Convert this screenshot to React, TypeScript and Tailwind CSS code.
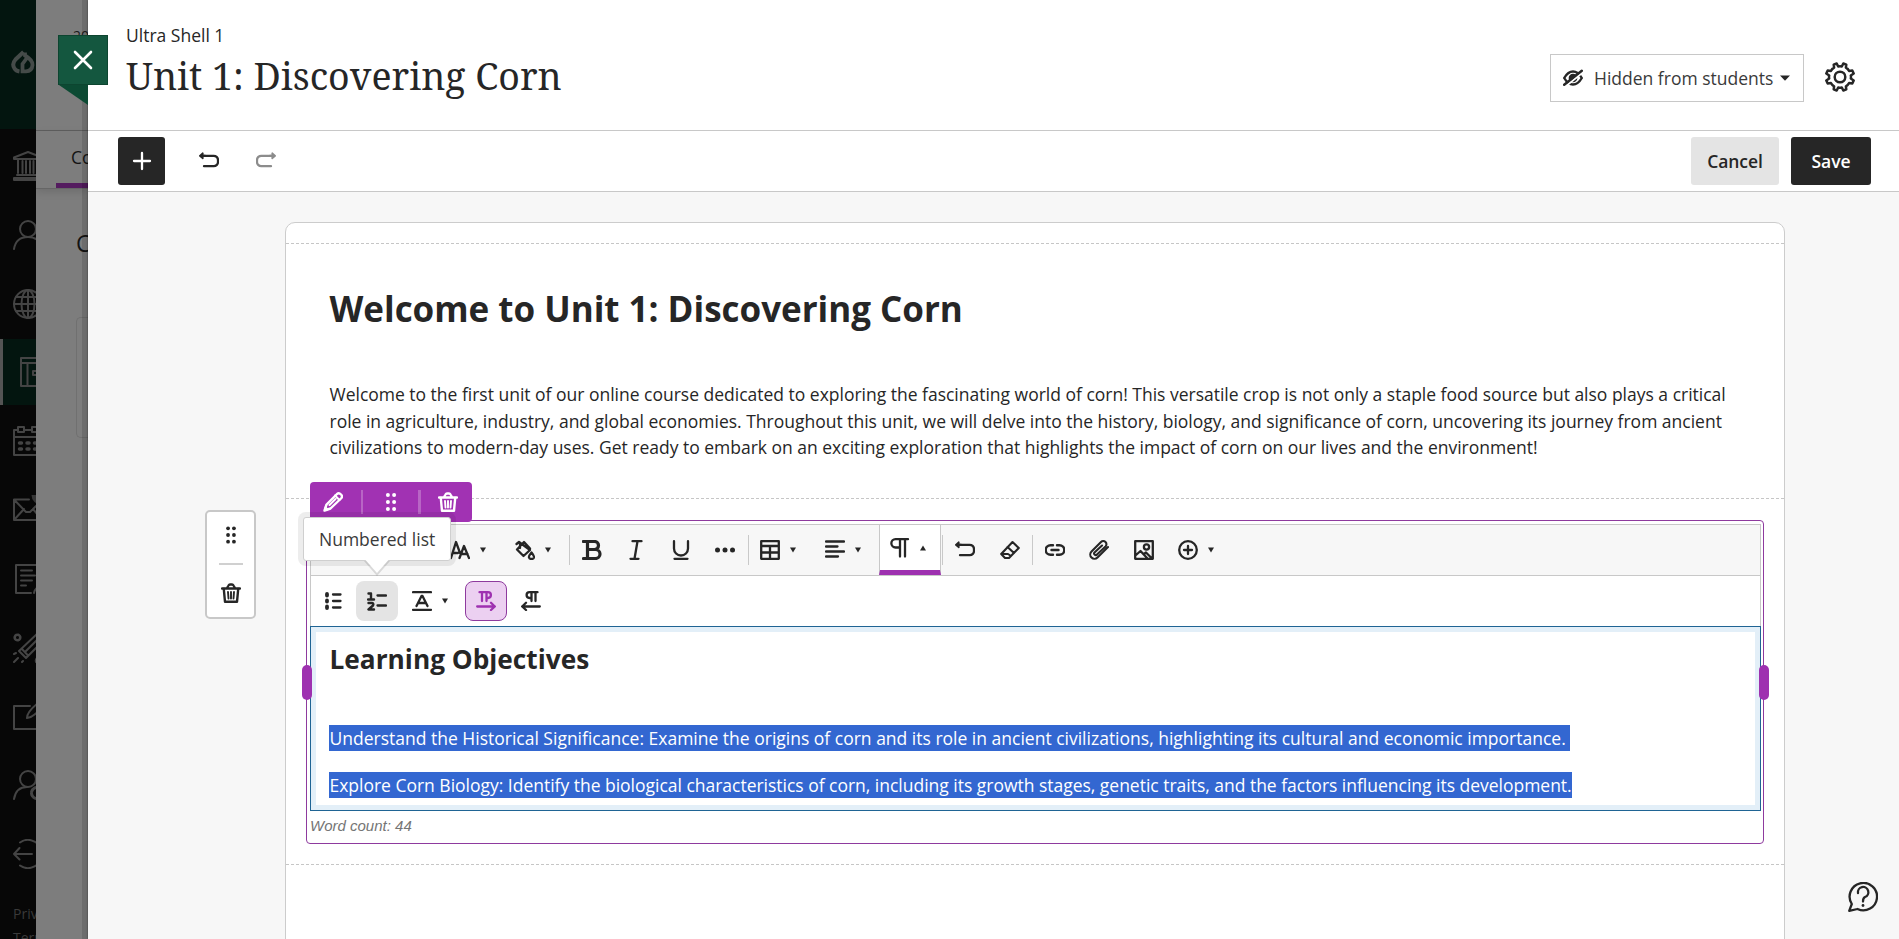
import React from 'react';

type IconProps = { className?: string; children: React.ReactNode; box?: string; weight?: number };

const Icon = ({ className = 'size-5', children, box = '0 0 20 20', weight = 2.3 }: IconProps) => (
  <svg
    viewBox={box}
    className={`shrink-0 ${className}`}
    fill="none"
    stroke="currentColor"
    strokeWidth={weight}
    strokeLinecap="round"
    strokeLinejoin="round"
  >
    {children}
  </svg>
);

const Undo = () => (
  <Icon>
    <path d="M5 4.800H14.500A4.300 4.300 0 0 1 19 9V10.500A4.300 4.300 0 0 1 14.500 15.200H5" />
    <path d="M0.800 4.800L3.800 2.200V7.400Z" fill="currentColor" strokeWidth="1.600" />
    <path d="M3 4.800H6" />
  </Icon>
);

const Trash = () => (
  <Icon>
    <path d="M1 5.500H19M6 5L7.500 2.500Q8 1.500 9 1.500H11Q12 1.500 12.500 2.500L14 5" />
    <path d="M2.800 6L4 18.800H16L17.200 6" strokeWidth="2.400" />
    <path d="M7 9L7.500 15.500M10 9V15.500M13 9L12.500 15.500" strokeWidth="1.900" />
  </Icon>
);

const Grip = () => (
  <Icon>
    <g fill="currentColor" stroke="none">
      {[3, 10, 17].map((y) => (
        <g key={y}>
          <circle cx="6.900" cy={y} r="2" />
          <circle cx="13.100" cy={y} r="2" />
        </g>
      ))}
    </g>
  </Icon>
);

const Caret = ({ up = false }: { up?: boolean }) => (
  <svg viewBox="0 0 6 6" className="size-1.5 shrink-0" fill="currentColor">
    <path d={up ? 'M0 5.500L3 0.500L6 5.500Z' : 'M0 0.500L3 5.500L6 0.500Z'} />
  </svg>
);

const Divider = () => <div className="h-[30px] w-px shrink-0 bg-[#c9c9c9]" />;

const DashedLine = () => (
  <div className="h-px w-full shrink-0 bg-[repeating-linear-gradient(to_right,#c6c6c6_0_3px,transparent_3px_5px)]" />
);

const Tool = ({ children }: { children: React.ReactNode }) => (
  <button className="flex h-full flex-1 items-center justify-center">{children}</button>
);

const DropTool = ({ children }: { children: React.ReactNode }) => (
  <button className="flex h-full w-[65px] shrink-0 items-center gap-2.5 pl-[11px]">
    {children}
    <Caret />
  </button>
);

const navIcons: { id: string; indent: string; active?: boolean; draw: React.ReactNode }[] = [
  {
    id: 'institution',
    indent: 'pl-[13px]',
    draw: (
      <>
        <path d="M1 8V6.500L15 1L29 6.500V8Z" />
        <path d="M5 9V22M9.500 10V22M13 10V22M17 10V22M20.500 10V22M25 9V22M4 24H26M1 29V27H29V29Z" />
      </>
    ),
  },
  {
    id: 'profile',
    indent: 'pl-[13px]',
    draw: (
      <>
        <circle cx="15" cy="9" r="8" />
        <path d="M1 29Q3 17 15 17T29 29" />
      </>
    ),
  },
  {
    id: 'activity',
    indent: 'pl-[13px]',
    draw: (
      <>
        <circle cx="15" cy="15" r="14" />
        <ellipse cx="15" cy="15" rx="6.500" ry="14" />
        <path d="M15 1V29M1 15H29M3 8H27M3 22H27" />
      </>
    ),
  },
  {
    id: 'courses',
    indent: 'pl-[17px]',
    active: true,
    draw: (
      <>
        <path d="M1 1H29V29H1ZM1 6H29M7.500 6V29M20 14H13V18H20" />
      </>
    ),
  },
  {
    id: 'calendar',
    indent: 'pl-[13px]',
    draw: (
      <>
        <path d="M4.500 4H1V29H29V4H26M12.500 4H18M1 11H29" />
        <rect x="5" y="1" width="6" height="5" />
        <rect x="19" y="1" width="6" height="5" />
        <path d="M6.500 17H8.500M14 17H16M21.500 17H23.500M6.500 23H8.500M14 23H16M21.500 23H23.500" strokeWidth="3.500" />
      </>
    ),
  },
  {
    id: 'messages',
    indent: 'pl-[13px]',
    draw: (
      <>
        <path d="M16 4.500H1V25H29V4.500M1 4.500L13 17H17L23 11M1 25L11 14M20 14L29 25" />
        <circle cx="28" cy="0" r="11" fill="#070707" stroke="none" />
        <circle cx="28" cy="0" r="9.500" fill="#353535" stroke="none" />
      </>
    ),
  },
  {
    id: 'grades',
    indent: 'pl-[15px]',
    draw: (
      <>
        <path d="M16 29H1V1H25V18M6 6.500H17M6 11.500H20M6 16.500H17M6 21.500H11M19 29Q20 24 25 22" />
      </>
    ),
  },
  {
    id: 'tools',
    indent: 'pl-[13px]',
    draw: (
      <>
        <circle cx="4.500" cy="4.500" r="2.800" strokeWidth="2.600" strokeDasharray="2.500 1" />
        <path d="M24 1L6 18L13 25L30 8M8.500 15.500L15 22.500M13 18L24 7M1 21L3 20M1 29L5 25M9 29L10 28M23 29Q22 26 25 24" />
      </>
    ),
  },
  {
    id: 'assist',
    indent: 'pl-[13px]',
    draw: (
      <>
        <path d="M17 4H1V27H28V15M14 16Q14 10 24 2L29 5Q21 15 14 16Z" />
      </>
    ),
  },
  {
    id: 'admin',
    indent: 'pl-[13px]',
    draw: (
      <>
        <circle cx="15" cy="9" r="8" />
        <path d="M1 29Q3 17 14 17" />
        <circle cx="24" cy="23" r="5.500" strokeDasharray="3 1.500" strokeWidth="3" />
      </>
    ),
  },
  {
    id: 'sign-out',
    indent: 'pl-[13px]',
    draw: (
      <>
        <path d="M7 3.500A14 14 0 0 1 29 15A14 14 0 0 1 7 26.500M19 15H1M6.500 9L1 15L6.500 20.500" />
      </>
    ),
  },
];

const Sidebar = () => (
  <aside className="flex h-full w-9 shrink-0 flex-col overflow-hidden bg-[#070707] text-[#444444]">
    <div className="flex h-[129px] shrink-0 items-start bg-[#03150f] pt-[50px] pl-[11px]">
      <svg viewBox="0 0 24 24" className="size-6 shrink-0" fill="none" stroke="#454b49" strokeWidth="4">
        <path d="M12.500 2L4.500 9.500Q0.500 14 3.500 18.500Q5 21 8.500 21.500" />
        <path d="M14 2.500V5.500Q21.800 10 21.500 15Q21 21 15 21.300H11.500V14L15.500 8.500" strokeWidth="3.800" />
      </svg>
    </div>
    <nav className="flex shrink-0 flex-col gap-[2.800px] pt-[3.800px]">
      {navIcons.map((n) => (
        <div
          key={n.id}
          className={
            n.active
              ? 'flex h-[66px] items-center overflow-hidden border-l-[3px] border-[#545454] bg-[#03150f]'
              : 'flex h-[66px] items-center overflow-hidden pt-px'
          }
        >
          <div className={n.indent}>
            <Icon className="size-[30px]" box="0 0 30 30" weight={2}>
              {n.draw}
            </Icon>
          </div>
        </div>
      ))}
    </nav>
    <div className="pt-[15px] pl-[13px] text-[14px] leading-[24px] text-[#3a3a3a]">
      <div>Privacy</div>
      <div>Terms</div>
    </div>
  </aside>
);

const CoursePeek = () => (
  <div className="relative flex h-full w-[52px] shrink-0 flex-col overflow-hidden bg-[#7d7d7d]">
    <div className="h-[131px] shrink-0 border-b border-[#5f5f5f] pt-[29px] pl-[37px] text-[14px] leading-[14px] text-[#1b1b1b]">
      2022
    </div>
    <div className="flex h-[58px] shrink-0 flex-col justify-between border-b border-[#666666] shadow-[0_3px_8px_rgba(0,0,0,0.12)]">
      <div className="pt-[14px] pl-[35px] text-[17.500px] leading-[24px] text-[#141414]">Content</div>
      <div className="ml-5 h-[5px] w-8 bg-[#541c5f]" />
    </div>
    <div className="pt-[38px] pl-10 text-[23px] leading-[32px] text-[#141414]">Course</div>
    <div className="mt-[58px] ml-10 h-[121px] w-3 rounded-l-[5px] border border-r-0 border-[#707070]" />
    <div className="absolute top-0 right-0 h-full w-1.5 bg-black/12" />
  </div>
);

const Header = () => (
  <header className="flex h-[131px] shrink-0 justify-between border-b border-[#c8c8c8] bg-white pr-11 pl-[38px]">
    <div className="flex flex-col pt-[23px]">
      <div className="text-[17.500px] leading-6">Ultra Shell 1</div>
      <h1 className="mt-[3px] font-['Noto_Serif',serif] text-[37.500px] leading-[51px]">Unit 1: Discovering Corn</h1>
    </div>
    <div className="flex items-start gap-[21px] pt-[54px]">
      <button className="flex h-12 w-[254px] items-center border border-[#c8c8c8] pl-3">
        <Icon>
          <path d="M1.200 10Q5 3.500 10 3.500T18.800 10Q15 16.500 10 16.500T1.200 10Z" strokeWidth="2.400" />
          <circle cx="10" cy="10" r="3.200" fill="currentColor" />
          <path d="M3 18L19.500 4.500" stroke="white" strokeWidth="2" />
          <path d="M1.200 16.800L18.800 2.800" strokeWidth="2.500" />
        </Icon>
        <span className="ml-[11px] text-[17.500px] leading-6 text-[#3a3a3a]">Hidden from students</span>
        <svg viewBox="0 0 10 6" className="ml-[7px] h-[6px] w-[10px]" fill="currentColor">
          <path d="M0 0.500H10L5 5.800Z" />
        </svg>
      </button>
      <svg viewBox="-15 -15 30 30" className="mt-2 size-[30px]" fill="none" stroke="currentColor" strokeWidth="2.500" strokeLinejoin="round">
        <circle r="5.300" />
        {/* eight-tooth gear outline */}
        <path d="M-1.800 -10.500L-3.300 -13.500L-6.300 -12.300L-5.900 -9.300Q-8 -8.200 -9.100 -6L-12.300 -6.500L-13.700 -3.500L-10.800 -1.500Q-11.200 0 -10.800 1.500L-13.700 3.500L-12.300 6.500L-9.100 6Q-8 8.200 -5.900 9.300L-6.300 12.300L-3.300 13.500L-1.800 10.500Q0 11 1.800 10.500L3.300 13.500L6.300 12.300L5.900 9.300Q8 8.200 9.100 6L12.300 6.500L13.700 3.500L10.800 1.500Q11.200 0 10.800 -1.500L13.700 -3.500L12.300 -6.500L9.100 -6Q8 -8.200 5.900 -9.300L6.300 -12.300L3.300 -13.500L1.800 -10.500Q0 -11 -1.800 -10.500Z" />
      </svg>
    </div>
  </header>
);

const ActionBar = () => (
  <div className="flex h-[61px] shrink-0 items-center justify-between border-b border-[#c8c8c8] bg-white pr-7 pl-[30px]">
    <div className="flex items-center">
      <button className="flex h-12 w-[47px] items-center justify-center rounded-[3px] bg-[#262626] text-white">
        <Icon>
          <path d="M10 2V18M2 10H18" />
        </Icon>
      </button>
      <button className="ml-[34px]">
        <Undo />
      </button>
      <button className="ml-[37px] -scale-x-100 text-[#8c8c8c]">
        <Undo />
      </button>
    </div>
    <div className="flex gap-3 text-[17.500px] font-semibold">
      <button className="h-12 w-[88px] rounded-[3px] bg-[#e4e4e4] tracking-[-0.1px]">Cancel</button>
      <button className="h-12 w-20 rounded-[3px] bg-[#262626] text-white">Save</button>
    </div>
  </div>
);

const FormatRow = () => (
  <div className="flex h-[51px] items-center border-b border-[#c8c8c8] bg-[#f7f7f7]">
    <div className="h-full w-[128px] shrink-0" />
    <DropTool>
      <Icon>
        <path d="M1 18L6 2L10 13M3 13H8M9.500 18L14 6L19 18M11 14H17.500" />
      </Icon>
    </DropTool>
    <DropTool>
      <Icon>
        <path d="M1.500 4L4 2L15 10L8.500 16L2 9.500L9 2L15 8.500M5 4V8" />
        <path d="M16.500 12.500Q13.500 16 14 17.500Q14.500 19 16.500 19T19 17.500Q19.300 16 16.500 12.500Z" />
      </Icon>
    </DropTool>
    <Divider />
    <div className="flex h-full w-[178px] shrink-0">
      <Tool>
        <Icon>
          <path d="M1.500 1.500H12.500A4 4 0 0 1 12.500 9.500H5.500M1.500 18.500H13.500A4.300 4.300 0 0 0 13.500 9.500M5.500 1.500V18.500" strokeWidth="3.200" />
        </Icon>
      </Tool>
      <Tool>
        <Icon>
          <path d="M5.500 1.200H14.500M3.500 18.800H11.500M10.500 1.200L7.500 18.800" />
        </Icon>
      </Tool>
      <Tool>
        <Icon>
          <path d="M3 1.200V8.500A7 7 0 0 0 17 8.500V1.200M3.500 18.800H16.500" />
        </Icon>
      </Tool>
      <Tool>
        <Icon className="-ml-px size-5">
          <g fill="currentColor" stroke="none">
            <circle cx="2.500" cy="10" r="2.500" />
            <circle cx="10" cy="10" r="2.500" />
            <circle cx="17.500" cy="10" r="2.500" />
          </g>
        </Icon>
      </Tool>
    </div>
    <Divider />
    <DropTool>
      <Icon>
        <path d="M1.200 1.200H18.800V18.800H1.200ZM1.200 6H18.800M1.200 12.500H18.800M10 6V18" />
      </Icon>
    </DropTool>
    <DropTool>
      <Icon>
        <path d="M1 1.500H19M1 6.500H12.500M1 11.500H19M1 16.500H13" />
      </Icon>
    </DropTool>
    <button className="flex h-full w-[62px] shrink-0 items-center gap-2.5 border-x border-b-[5px] border-x-[#c8c8c8] border-b-[#9e31b0] bg-white pl-2.5">
      <Icon>
        <path d="M18 1.200H5.500A4 4 0 0 0 5.500 9.500H10M10 1.500V18.500M15 1.500V18.500" />
      </Icon>
      <Caret up />
    </button>
    <div className="ml-px flex items-center">
      <Divider />
    </div>
    <div className="flex h-full w-[89px] shrink-0">
      <Tool>
        <Undo />
      </Tool>
      <Tool>
        <Icon>
          <path d="M12.500 2L18.800 8L9 18H5L1.200 14Z M7.500 7L14 13M1.500 14H8L11 16" strokeWidth="2.100" />
        </Icon>
      </Tool>
    </div>
    <Divider />
    <div className="flex h-full w-[133px] shrink-0">
      <Tool>
        <Icon>
          <path d="M8 5.200H5.500A4.500 4.500 0 0 0 5.500 14.800H8M12 5.200H14.500A4.500 4.500 0 0 1 14.500 14.800H12M6.500 10H13.500" strokeWidth="2.400" />
        </Icon>
      </Tool>
      <Tool>
        <Icon>
          <path d="M19 7L8.500 17.500A4.200 4.200 0 0 1 2.500 11.500L12 2A3 3 0 0 1 16.500 6.500L8 14.500A1 1 0 0 1 5.500 12.500L13 5.500" strokeWidth="2.100" />
        </Icon>
      </Tool>
      <Tool>
        <Icon>
          <path d="M1.200 1.200H18.800V18.800H1.200ZM2 15L6.500 11L13.500 18.500M10 14L12 12.500L18 18.500" />
          <circle cx="12.500" cy="7" r="2.600" />
        </Icon>
      </Tool>
    </div>
    <DropTool>
      <Icon className="ml-px size-5">
        <circle cx="10" cy="10" r="8.800" />
        <path d="M10 6V14M6 10H14" />
      </Icon>
    </DropTool>
  </div>
);

const ParagraphRow = () => (
  <div className="flex h-[50px] items-center bg-white">
    <div className="flex h-full w-[89px] shrink-0 items-center">
      <Tool>
        <Icon>
          <path d="M9 3.500H16.500M9 10H16.500M9 16.500H16.500" />
          <path d="M3 3V4.500M3 9.500V10.500M3 15.500V17" strokeWidth="3.800" />
        </Icon>
      </Tool>
      <button className="mr-0.5 flex h-10 w-[42px] items-center justify-center rounded-lg bg-[#e4e4e4]">
        <Icon>
          <path d="M10.500 4.500H19M10.500 14.500H19" />
          <path d="M1.500 2.500H4V8.500M1 8.500H7M1.500 12H5Q7 12.500 6 14.500L1.500 18.500H7" strokeWidth="2.400" />
        </Icon>
      </button>
    </div>
    <button className="flex h-full w-16 shrink-0 items-center gap-2.5 pl-3">
      <Icon>
        <path d="M1 1.200H19M1 18.800H19M4.500 15L9.500 5H10.500L15.500 15M6.500 12H13.500" />
      </Icon>
      <Caret />
    </button>
    <div className="flex h-full items-center gap-[3px]">
      <button className="ml-px flex h-10 w-[42px] items-center justify-center rounded-lg border border-[#8e3a9e] bg-[#ecd0f1] text-[#9e31b0]">
        <Icon>
          <path d="M3.500 1.200H12A2.800 2.800 0 0 1 12 7H10.500M6 1.500V10M10.500 1.500V10M1.200 15.500H18.800M15 11.800L18.800 15.500L15 19" />
        </Icon>
      </button>
      <button className="flex h-10 w-[42px] items-center justify-center">
        <Icon>
          <path d="M16.500 1.200H8.500A2.800 2.800 0 0 0 8.500 7H10.500M10.500 1.500V10M14.500 1.500V10M1.200 15.500H18.800M5 11.800L1.200 15.500L5 19" />
        </Icon>
      </button>
    </div>
  </div>
);

const Handle = ({ className }: { className: string }) => (
  <div className={`absolute top-[144px] h-[35px] w-2.5 rounded-full bg-[#9e31b0] ${className}`} />
);

const BlockToolbar = () => (
  <div className="absolute -top-[39px] left-[3px] flex h-10 w-[162px] items-center rounded-t-[4px] rounded-br-[4px] bg-[#a132b3] text-white">
    <div className="flex w-[51px] justify-center pr-1.5">
      <Icon>
        <path d="M1.500 18.500L3.500 12.500L14 2Q16 0.500 18 2.500T18 6.500L7.500 16.500Z" strokeWidth="2.400" />
        <path d="M12 3.500L16.500 8M6.500 13L12.500 7M2.500 15.500L4.500 17.500" strokeWidth="2" />
      </Icon>
    </div>
    <div className="h-6 w-0.5 bg-[#b865c5]" />
    <div className="flex w-[55px] justify-center">
      <Grip />
    </div>
    <div className="h-6 w-[3px] bg-[#b865c5]" />
    <div className="flex flex-1 justify-center pl-[3px]">
      <Trash />
    </div>
  </div>
);

const Tooltip = () => (
  <div className="absolute -top-[4px] -left-[4px] h-[44px] w-[148px] rounded-[3px] border border-[#cfcfcf] bg-white shadow-[0_0_0_5px_rgba(0,0,0,0.07)]">
    <div className="pl-[15px] text-[17.500px] leading-[43px] text-[#3a3a3a]">Numbered list</div>
    <svg viewBox="0 0 26 16" className="absolute top-[42px] left-[60px] h-4 w-[26px]">
      <path d="M0 1L13 16L26 1Z" fill="#000000" opacity="0.12" />
      <path d="M1.500 0L13 13L24.500 0Z" fill="#ffffff" />
    </svg>
  </div>
);

const EditorBlock = () => (
  <section className="relative mt-[21px] ml-5 h-[324px] w-[1458px] rounded-[4px] border border-[#8e3a9e] pt-[3px] pl-[3px]">
    <div className="w-[1451px]">
      <div className="border-x border-t border-[#c8c8c8]">
        <FormatRow />
        <ParagraphRow />
      </div>
      <div className="h-[185px] border border-[#1f6494] bg-white shadow-[inset_0_0_0_5px_#e3eff8]">
        <div className="flex flex-col items-start pt-3.5 pl-[18px]">
          <h2 className="pl-[0.500px] text-[26.250px] leading-9 font-bold">Learning Objectives</h2>
          <p className="mt-12 h-[26px] bg-[#3367d1] pr-[4px] pl-[0.500px] text-[17.500px] leading-[26px] whitespace-nowrap text-white">
            Understand the Historical Significance: Examine the origins of corn and its role in ancient civilizations, highlighting its cultural and economic importance.
          </p>
          <p className="mt-[21px] h-[26px] bg-[#3367d1] pl-[0.500px] text-[17.500px] leading-[26px] tracking-[-0.015px] whitespace-nowrap text-white">
            Explore Corn Biology: Identify the biological characteristics of corn, including its growth stages, genetic traits, and the factors influencing its development.
          </p>
        </div>
      </div>
      <div className="pt-1 font-['Liberation_Sans',sans-serif] text-[15px] leading-[21px] text-[#757575] italic">Word count: 44</div>
    </div>
    <Handle className="-left-[5px]" />
    <Handle className="-right-[6px]" />
    <BlockToolbar />
    <Tooltip />
  </section>
);

const SideControls = () => (
  <div className="absolute top-[287px] -left-[81px] flex h-[109px] w-[51px] flex-col items-center rounded-[5px] border-2 border-[#c8c8c8] bg-white">
    <div className="mt-[13px] scale-95">
      <Grip />
    </div>
    <div className="mt-[18px] h-0.5 w-6 bg-[#d0d0d0]" />
    <div className="mt-[18px]">
      <Trash />
    </div>
  </div>
);

const DocumentCard = () => (
  <article className="relative mt-[30px] ml-[197px] h-[760px] w-[1500px] rounded-t-[10px] border border-[#cccccc] bg-white">
    <div className="h-5" />
    <DashedLine />
    <section className="h-[254px] pt-[41px] pl-[43.500px]">
      <h2 className="text-[35px] leading-12 font-bold tracking-[-0.020px]">Welcome to Unit 1: Discovering Corn</h2>
      <p className="mt-12 w-[1410px] text-[17.500px] leading-[26.670px] tracking-[-0.008px]">
        Welcome to the first unit of our online course dedicated to exploring the fascinating world of corn! This versatile crop is not only a staple food source but also plays a critical role in agriculture, industry, and global economies. Throughout this unit, we will delve into the history, biology, and significance of corn, uncovering its journey from ancient civilizations to modern-day uses. Get ready to embark on an exciting exploration that highlights the impact of corn on our lives and the environment!
      </p>
    </section>
    <DashedLine />
    <div className="h-[365px] pt-[21px]">
      <div className="-mt-[21px] flex">
        <EditorBlock />
      </div>
    </div>
    <DashedLine />
    <SideControls />
  </article>
);

const CloseTab = () => (
  <div className="absolute top-[35px] left-[58px] flex flex-col items-start">
    <button className="flex size-[50px] items-center justify-center border border-[#0d4530] bg-[#14573f] pb-px text-white">
      <Icon weight={2.6}>
        <path d="M2 2L18 18M18 2L2 18" />
      </Icon>
    </button>
    <svg viewBox="0 0 29 20" className="ml-px h-5 w-[29px]">
      <path d="M0 0H29V20Z" fill="#0c4a33" />
    </svg>
  </div>
);

const HelpButton = () => (
  <button className="absolute right-[21px] bottom-[27px]">
    <Icon className="size-[30px]" box="0 0 30 30">
      <path d="M1.200 28.800L3.800 22A13.700 13.700 0 1 1 9.500 27Z" />
      <path d="M10 11A5.200 5.200 0 1 1 17 15Q15 16 15 19.500" />
      <circle cx="15" cy="23.500" r="1.400" fill="currentColor" stroke="none" />
    </Icon>
  </button>
);

export default function App() {
  return (
    <div className="relative flex h-[939px] w-[1899px] overflow-hidden bg-[#7d7d7d] font-['Open_Sans',sans-serif] text-[#262626]">
      <Sidebar />
      <CoursePeek />
      <main className="relative flex h-full min-w-0 flex-1 flex-col bg-[#f7f7f7] shadow-[0_0_2px_rgba(0,0,0,0.5)]">
        <Header />
        <ActionBar />
        <div className="min-h-0 flex-1 overflow-hidden">
          <DocumentCard />
        </div>
      </main>
      <CloseTab />
      <HelpButton />
    </div>
  );
}
